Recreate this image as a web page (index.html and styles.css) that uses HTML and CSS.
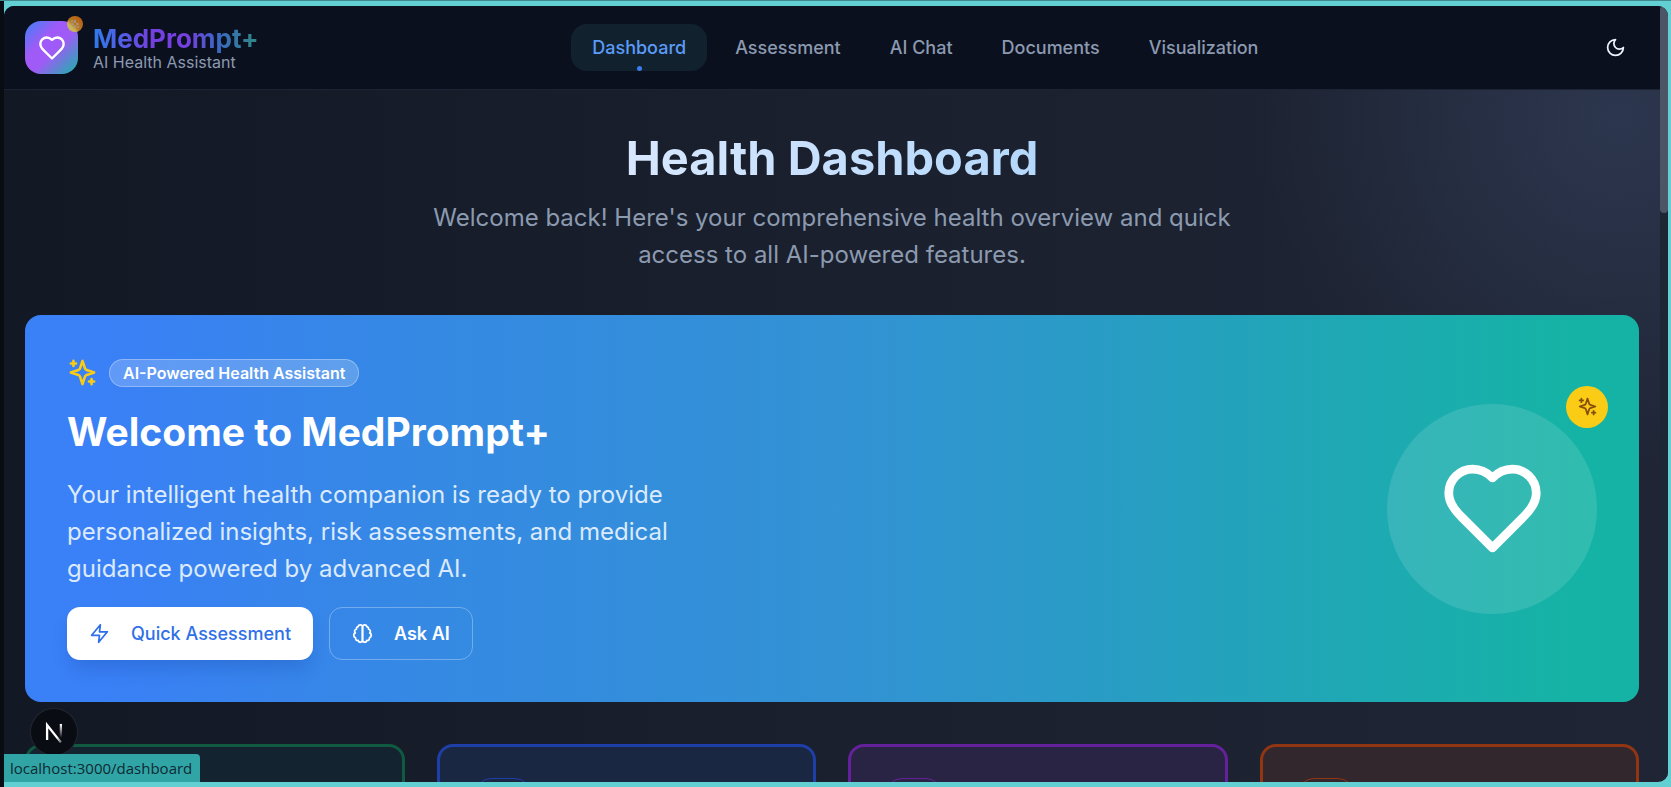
FILE: index.html
```html
<!DOCTYPE html>
<html lang="en">
<head>
  <meta charset="UTF-8" />
  <meta name="viewport" content="width=device-width, initial-scale=1.0" />
  <title>MedPrompt+ - Health Dashboard</title>
  <link rel="stylesheet" href="styles.css">
</head>
<body>
  <svg class="sprite" aria-hidden="true">
    <symbol id="heart" viewBox="0 0 24 24">
      <path d="M19 14c1.49-1.46 3-3.21 3-5.5A5.5 5.5 0 0 0 16.5 3c-1.76 0-3 .5-4.5 2-1.5-1.5-2.74-2-4.5-2A5.5 5.5 0 0 0 2 8.5c0 2.3 1.5 4.05 3 5.5l7 7Z"/>
    </symbol>
    <symbol id="sparkles" viewBox="0 0 24 24">
      <path d="m12 3-1.912 5.813a2 2 0 0 1-1.275 1.275L3 12l5.813 1.912a2 2 0 0 1 1.275 1.275L12 21l1.912-5.813a2 2 0 0 1 1.275-1.275L21 12l-5.813-1.912a2 2 0 0 1-1.275-1.275L12 3Z"/>
      <path d="M5 3v4M19 17v4M3 5h4M17 19h4"/>
    </symbol>
  </svg>

  <div class="window">
    <div class="page">
      <header class="header">
        <a class="brand" href="#">
          <span class="brand-logo">
            <svg class="icon"><use href="#heart"/></svg>
            <span class="brand-spark"><svg class="icon"><use href="#sparkles"/></svg></span>
          </span>
          <span class="brand-text">
            <span class="brand-name">MedPrompt+</span>
            <span class="brand-tag">AI Health Assistant</span>
          </span>
        </a>

        <nav class="nav">
          <a class="nav-link active" href="#">Dashboard</a>
          <a class="nav-link" href="#">Assessment</a>
          <a class="nav-link" href="#">AI Chat</a>
          <a class="nav-link" href="#">Documents</a>
          <a class="nav-link" href="#">Visualization</a>
        </nav>

        <button class="theme-btn" aria-label="Toggle theme">
          <svg class="icon" viewBox="0 0 24 24"><path d="M12 3a6 6 0 0 0 9 9 9 9 0 1 1-9-9Z"/></svg>
        </button>
      </header>

      <main class="main">
        <div class="intro">
          <h1>Health Dashboard</h1>
          <p>Welcome back! Here's your comprehensive health overview and quick access to all AI-powered features.</p>
        </div>

        <section class="hero">
          <div class="hero-content">
            <div class="hero-top">
              <svg class="icon"><use href="#sparkles"/></svg>
              <span class="badge">AI-Powered Health Assistant</span>
            </div>
            <h2>Welcome to MedPrompt+</h2>
            <p>Your intelligent health companion is ready to provide personalized insights, risk assessments, and medical guidance powered by advanced AI.</p>
            <div class="hero-actions">
              <button class="btn btn-primary">
                <svg class="icon" viewBox="0 0 24 24"><path d="M13 2 3 14h9l-1 8 10-12h-9l1-8Z"/></svg>
                Quick Assessment
              </button>
              <button class="btn btn-outline">
                <svg class="icon" viewBox="0 0 24 24">
                  <path d="M9.5 2A2.5 2.5 0 0 1 12 4.5v15a2.5 2.5 0 0 1-4.96.44 2.5 2.5 0 0 1-2.96-3.08 3 3 0 0 1-.34-5.58 2.5 2.5 0 0 1 1.32-4.24 2.5 2.5 0 0 1 1.98-3A2.5 2.5 0 0 1 9.5 2Z"/>
                  <path d="M14.5 2A2.5 2.5 0 0 0 12 4.5v15a2.5 2.5 0 0 0 4.96.44 2.5 2.5 0 0 0 2.96-3.08 3 3 0 0 0 .34-5.58 2.5 2.5 0 0 0-1.32-4.24 2.5 2.5 0 0 0-1.98-3A2.5 2.5 0 0 0 14.5 2Z"/>
                </svg>
                Ask AI
              </button>
            </div>
          </div>
          <div class="hero-art">
            <svg class="icon"><use href="#heart"/></svg>
            <span class="hero-spark"><svg class="icon"><use href="#sparkles"/></svg></span>
          </div>
        </section>

        <section class="cards">
          <div class="card green"><span class="card-icon"></span></div>
          <div class="card blue"><span class="card-icon"></span></div>
          <div class="card purple"><span class="card-icon"></span></div>
          <div class="card orange"><span class="card-icon"></span></div>
        </section>
      </main>
    </div>

    <div class="scroll-track"><div class="scroll-thumb"></div></div>

    <button class="dev-btn" aria-label="Open dev tools">
      <svg viewBox="0 0 40 40" fill="none">
        <defs>
          <linearGradient id="fadeA" gradientUnits="userSpaceOnUse" x1="20" y1="20" x2="28" y2="30">
            <stop offset="0.4" stop-color="#fff"/>
            <stop offset="1" stop-color="#fff" stop-opacity="0.2"/>
          </linearGradient>
          <linearGradient id="fadeB" gradientUnits="userSpaceOnUse" x1="26" y1="13" x2="26" y2="25">
            <stop offset="0" stop-color="#fff"/>
            <stop offset="1" stop-color="#fff" stop-opacity="0"/>
          </linearGradient>
        </defs>
        <path d="M14 27V14L26 29" stroke="url(#fadeA)" stroke-width="2"/>
        <path d="M26 13v12" stroke="url(#fadeB)" stroke-width="2"/>
      </svg>
    </button>
    <div class="status">localhost:3000/dashboard</div>
  </div>
</body>
</html>
```
FILE: styles.css
```css
:root {
  --teal: #62d0d2;
  --teal-dark: #40898e;
  --muted: #8c9ab0;
  --gap: 42px;
}

* {
  margin: 0;
  padding: 0;
  box-sizing: border-box;
}

body {
  height: 100vh;
  padding: 5px 3px 5px 4px;
  overflow: hidden;
  background: linear-gradient(to right, #080c13 4px, var(--teal) 4px);
  border-top: 1px solid var(--teal-dark);
  font-family: 'Inter', sans-serif;
  color: #fff;
}

a {
  color: inherit;
  text-decoration: none;
}

button {
  font: inherit;
  color: inherit;
  border: none;
  background: none;
  cursor: pointer;
}

.sprite {
  display: none;
}

.icon {
  display: block;
  flex-shrink: 0;
  fill: none;
  stroke: currentColor;
  stroke-width: 2;
  stroke-linecap: round;
  stroke-linejoin: round;
}

.window {
  position: relative;
  height: 100%;
  overflow: hidden;
  border-radius: 10px 10px 10px 0;
  background:
    radial-gradient(circle at 97% 110px, #2c364e 0, rgba(44, 54, 78, 0) 360px),
    linear-gradient(to right, #121925, #1a202d 50%, #1f2535);
}

.page {
  padding-right: 8px;
}

/* header */
.header {
  display: flex;
  align-items: center;
  justify-content: space-between;
  height: 84px;
  padding: 0 21px;
  background: #0b101f;
  border-bottom: 1px solid #1c2433;
}

.brand {
  display: flex;
  align-items: center;
  gap: 15px;
}

.brand-logo {
  position: relative;
  display: flex;
  align-items: center;
  justify-content: center;
  width: 53px;
  height: 53px;
  border-radius: 16px;
  background: linear-gradient(135deg, #3b82f6, #a05af7 35%, #a05af7 55%, #14b8a6);
}

.brand-logo > .icon {
  width: 28px;
  height: 28px;
}

.brand-spark {
  position: absolute;
  top: -5px;
  right: -5px;
  display: flex;
  align-items: center;
  justify-content: center;
  width: 16px;
  height: 16px;
  border-radius: 50%;
  background: linear-gradient(45deg, #c8b45a 30%, #b9751a 45%, #b45a14);
  color: #a3a09c;
}

.brand-spark .icon {
  width: 10px;
  height: 10px;
}

.brand-text {
  display: flex;
  flex-direction: column;
}

.brand-name {
  font-size: 26px;
  line-height: 30px;
  font-weight: 700;
  background: linear-gradient(to right, #2f7bea, #7440e0 35%, #7440e0 58%, #3a68c4 75%, #2f8a80);
  -webkit-background-clip: text;
  background-clip: text;
  color: transparent;
}

.brand-tag {
  font-size: 16px;
  line-height: 17px;
  color: var(--muted);
}

.nav {
  display: flex;
  gap: 7px;
}

.nav-link {
  position: relative;
  padding: 0 21px;
  border-radius: 16px;
  font-size: 18px;
  line-height: 47px;
  font-weight: 500;
  color: var(--muted);
}

.nav-link.active {
  background: #11222e;
  color: #5c9bf8;
}

.nav-link.active::after {
  content: "";
  position: absolute;
  bottom: 0;
  left: 50%;
  width: 5px;
  height: 5px;
  margin-left: -2px;
  border-radius: 50%;
  background: #3b7cf0;
}

.theme-btn {
  display: flex;
  align-items: center;
  justify-content: center;
  width: 47px;
  height: 47px;
  color: #eef4fc;
}

.theme-btn .icon {
  width: 21px;
  height: 21px;
}

/* page content */
.main {
  display: flex;
  flex-direction: column;
  gap: var(--gap);
  padding: var(--gap) 21px;
}

.intro {
  display: flex;
  flex-direction: column;
  align-items: center;
  gap: 15px;
  text-align: center;
}

.intro h1 {
  font-size: 47px;
  line-height: 52px;
  font-weight: 700;
  background: linear-gradient(to right, #d8e7fe, #b4d8fb);
  -webkit-background-clip: text;
  background-clip: text;
  color: transparent;
}

.intro p {
  max-width: 840px;
  font-size: 24px;
  line-height: 37px;
  color: var(--muted);
}

.hero {
  display: flex;
  align-items: center;
  justify-content: space-between;
  padding: var(--gap);
  border-radius: 16px;
  background: linear-gradient(to right, #3a80f6 5%, #3589e3 25%, #3293d3 52%, #2a9bc7 65%, #20a7b6 80%, #15b3a5 96%);
}

.hero-top {
  display: flex;
  align-items: center;
  gap: 11px;
}

.hero-top .icon {
  width: 31px;
  height: 31px;
  color: #facc15;
}

.badge {
  padding: 0 13px;
  border: 1px solid rgba(255, 255, 255, 0.3);
  border-radius: 14px;
  background: rgba(255, 255, 255, 0.2);
  font-size: 16px;
  line-height: 26px;
  font-weight: 600;
}

.hero h2 {
  margin: 20px 0 21px;
  font-size: 39px;
  line-height: 47px;
  font-weight: 700;
}

.hero p {
  max-width: 630px;
  font-size: 24px;
  line-height: 37px;
  color: #dceafd;
}

.hero-actions {
  display: flex;
  gap: 16px;
  margin-top: 20px;
}

.btn {
  display: flex;
  align-items: center;
  gap: 21px;
  height: 53px;
  padding: 0 22px;
  border-radius: 13px;
  font-size: 18px;
  font-weight: 500;
}

.btn .icon {
  width: 21px;
  height: 21px;
}

.btn-primary {
  background: #fff;
  color: #2f6fe8;
  box-shadow: 0 12px 18px -4px rgba(10, 50, 140, 0.22);
}

.btn-outline {
  border: 1px solid rgba(255, 255, 255, 0.3);
  font-weight: 600;
}

.hero-art {
  position: relative;
  display: flex;
  align-items: center;
  justify-content: center;
  width: 210px;
  height: 210px;
  border-radius: 50%;
  background: rgba(255, 255, 255, 0.12);
}

.hero-art > .icon {
  width: 105px;
  height: 105px;
}

.hero-spark {
  position: absolute;
  top: -18px;
  right: -11px;
  display: flex;
  align-items: center;
  justify-content: center;
  width: 42px;
  height: 42px;
  border-radius: 50%;
  background: #facc15;
  color: #854d0e;
}

.hero-spark .icon {
  width: 21px;
  height: 21px;
}

.cards {
  display: grid;
  grid-template-columns: repeat(4, 1fr);
  gap: 32px;
}

.card {
  height: 240px;
  padding: 31px 35px;
  border: 3px solid;
  border-radius: 16px;
}

.card-icon {
  display: block;
  width: 56px;
  height: 56px;
  border: 1px solid;
  border-color: inherit;
  border-radius: 16px;
}

.green {
  background: #13232f;
  border-color: #0f5a41;
}

.blue {
  background: #1a2742;
  border-color: #1e3fa8;
}

.purple {
  background: #2a2444;
  border-color: #65219c;
}

.orange {
  background: #33272e;
  border-color: #923512;
}

/* browser overlays */
.scroll-track {
  position: absolute;
  top: 0;
  right: 0;
  bottom: 0;
  width: 8px;
  background: #1d2635;
}

.scroll-thumb {
  height: 207px;
  border-radius: 4px;
  background: #4b5565;
}

.dev-btn {
  position: absolute;
  left: 27px;
  bottom: 27px;
  width: 46px;
  height: 46px;
  border-radius: 50%;
  background: #090c12;
  box-shadow: 0 0 0 1px #22262e;
}

.dev-btn svg {
  display: block;
}

.status {
  position: absolute;
  left: 0;
  bottom: 0;
  padding: 0 8px 0 6px;
  border-top-right-radius: 4px;
  background: #31a5a6;
  font-family: 'Open Sans', sans-serif;
  font-size: 15px;
  line-height: 28px;
  color: #0d2a33;
}
```
